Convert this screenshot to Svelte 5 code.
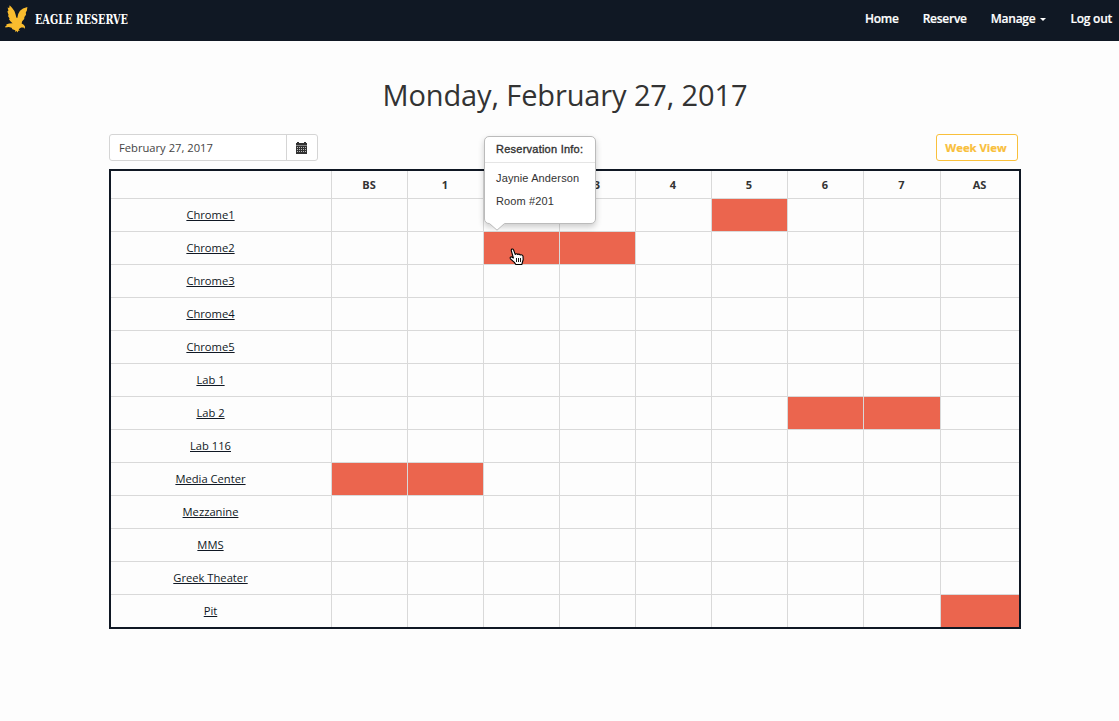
<script>
  const periods = ['BS', '1', '2', '3', '4', '5', '6', '7', 'AS'];
  const rooms = [
    { name: 'Chrome1', booked: ['5'] },
    { name: 'Chrome2', booked: ['2', '3'] },
    { name: 'Chrome3', booked: [] },
    { name: 'Chrome4', booked: [] },
    { name: 'Chrome5', booked: [] },
    { name: 'Lab 1', booked: [] },
    { name: 'Lab 2', booked: ['6', '7'] },
    { name: 'Lab 116', booked: [] },
    { name: 'Media Center', booked: ['BS', '1'] },
    { name: 'Mezzanine', booked: [] },
    { name: 'MMS', booked: [] },
    { name: 'Greek Theater', booked: [] },
    { name: 'Pit', booked: ['AS'] }
  ];
</script>

<nav class="navbar">
  <a class="brand" href="#home">
    <svg class="eagle" viewBox="0 0 24 30" width="24" height="30">
      <path fill="#f9bc2e" d="M4.6 1.2 L6.8 3.6 L9.4 7 L10.6 10.4 L11.3 13.6 L12.3 14 L13.2 10 L15 6.8 L18 4.6 L22.4 3 L21.9 6.4 L20.8 8.6 L21 10.8 L19.4 13 L19.2 15 L17.2 17.2 L16.6 19.6 L18.4 20.6 L19.9 22.2 L20 24.8 L18.4 23.6 L16.2 23.4 L14.6 24.6 L13.6 25.6 L15 26.6 L13.2 26.8 L12.8 28.4 L11.6 27 L10.4 28 L10.2 26.2 L7.4 25.2 L6.6 23.8 L3.8 23 L0.4 23.6 L.2 22.6 L2 21 L1 20.4 L4.2 19.6 L7.6 19.2 L5.6 17.4 L4 15.2 L4.6 14.4 L3 12 L3.6 11 L2.4 7.6 L3.4 6.6 L2.6 3.4 L4.2 4 Z" />
    </svg>
    <svg class="wordmark" width="100" height="20"><text x="0" y="15" textLength="93" lengthAdjust="spacingAndGlyphs">EAGLE RESERVE</text></svg>
  </a>
  <div class="links">
    <a href="#home">Home</a>
    <a href="#reserve">Reserve</a>
    <a href="#manage">Manage<i class="caret"></i></a>
    <a href="#logout">Log out</a>
  </div>
</nav>

<main>
  <h1>Monday, February 27, 2017</h1>
  <div class="toolbar">
    <div class="datepicker">
      <span class="date">February 27, 2017</span>
      <span class="addon">
        <svg width="11" height="12" viewBox="0 0 11 12" shape-rendering="crispEdges">
          <path fill="#333" d="M0 1h1V0h2v1h5V0h2v1h1v2H0z" />
          <path fill="#888" d="M0 3h11v1H0z" />
          <path fill="#333" d="M0 4h11v8H0z" />
          <path stroke="#bbb" stroke-width="1" stroke-dasharray="1 1" d="M1 5.5h9M1 7.5h9M1 9.5h9" />
        </svg>
      </span>
    </div>
    <button class="week">Week View</button>
  </div>

  <div class="schedule">
    <div class="row head">
      <div class="cell"></div>
      {#each periods as p}<div class="cell">{#if p !== '2'}{p}{/if}</div>{/each}
    </div>
    {#each rooms as room}
      <div class="row">
        <div class="cell"><a href="#room">{room.name}</a></div>
        {#each periods as p}
          <div class="cell" class:booked={room.booked.includes(p)}>
            {#if room.name === 'Chrome2' && p === '2'}
              <div class="popover">
                <div class="title">Reservation Info:</div>
                <div class="body">
                  <p>Jaynie Anderson</p>
                  <p>Room #201</p>
                </div>
                <svg class="arrow" width="16" height="8" viewBox="0 0 16 8">
                  <path fill="#fff" d="M0 0h16L8 7z" />
                  <path fill="none" stroke="#bbb" d="M.5 .5L8 7.2L15.5 .5" />
                </svg>
              </div>
              <svg class="pointer" width="15" height="18" viewBox="0 0 15 18">
                <path fill="#fff" stroke="#000" stroke-width="1.1" stroke-linejoin="round" d="M4.4 10 L2.4 3 C1.8 1 3.8 .3 4.6 2 L6.2 6.4 C6.8 5.4 8.2 5.6 8.7 6.5 C9.4 5.8 10.7 6 11.2 7 C12.4 6.4 13.8 7 14 8.2 L14.2 11.5 L12.8 16.5 H6.8 L5.4 14.4 L1.4 10.8 C.6 9.2 2 8.4 3.2 9.2 Z" />
                <path stroke="#000" stroke-width=".9" d="M7.5 10v4M9.5 10v4M11.5 10v4" />
              </svg>
            {/if}
          </div>
        {/each}
      </div>
    {/each}
  </div>
</main>

<style>
  :global(body) {
    background: #fdfdfd;
    color: #333;
    font: 11.2px/17px "Open Sans", sans-serif;
  }
  .navbar {
    box-sizing: border-box;
    height: 41px;
    background: #101824;
    display: flex;
    justify-content: space-between;
    padding: 0 7px 0 5px;
  }
  a { color: inherit; }
  .brand { display: flex; align-items: flex-start; gap: 6px; text-decoration: none; }
  .eagle { margin-top: 4px; }
  .wordmark { margin-top: 9px; }
  .wordmark text { font: bold 12.5px "DejaVu Serif Condensed", "DejaVu Serif", serif; fill: #fff; }
  .links { display: flex; gap: 24px; color: #fff; font-size: 12px; font-weight: 600; line-height: 37px; letter-spacing: -.25px; -webkit-text-stroke: .2px #fff; }
  .links a { text-decoration: none; white-space: nowrap; }
  .caret {
    display: inline-block;
    border: 3px solid transparent;
    border-top-color: #fff;
    border-bottom: 0;
    margin-left: 5px;
    vertical-align: 2px;
  }
  main { width: 912px; margin-left: 109px; padding-top: 34px; }
  h1 { margin: 0; font-size: 29px; font-weight: 400; line-height: 40px; text-align: center; letter-spacing: -.12px; }
  .toolbar { display: flex; justify-content: space-between; margin-top: 19px; padding-right: 3px; }
  .datepicker {
    box-sizing: border-box;
    width: 209px;
    height: 27px;
    border: 1px solid #d5d5d5;
    border-radius: 3px;
    display: flex;
    background: #fff;
  }
  .date { flex: 1; padding-left: 9px; line-height: 25px; color: #444; }
  .addon { width: 29px; padding-right: 1px; border-left: 1px solid #d5d5d5; display: flex; align-items: center; justify-content: center; }
  .week {
    box-sizing: border-box;
    width: 82px;
    height: 27px;
    padding: 0 2px 0 0;
    border: 1px solid #f9c03c;
    border-radius: 3px;
    background: #fff;
    color: #f9c03c;
    font: bold 11.3px/25px "Open Sans", sans-serif;
    -webkit-text-stroke: .2px #f9c03c;
  }
  .schedule { border: 2px solid #101824; margin-top: 8px; }
  .row { display: grid; grid-template-columns: 221px repeat(7, 76px) 77px 78px; height: 33px; }
  .head { height: 28px; font-weight: 700; font-size: 11px; }
  .head .cell { padding-right: 1px; }
  .cell {
    position: relative;
    box-sizing: border-box;
    border-right: 1px solid #d9d9d9;
    border-bottom: 1px solid #d9d9d9;
    display: flex;
    align-items: center;
    justify-content: center;
    color: #333;
  }
  .row:not(.head) .cell:first-child { padding: 0 21px 2px 0; }
  .cell > a { color: #101824; text-underline-offset: 1px; }
  .cell:last-child { border-right: 0; }
  .row:last-child { height: 32px; }
  .row:last-child .cell { border-bottom: 0; }
  .booked { background: #eb654e; }
  .popover {
    position: absolute;
    z-index: 2;
    left: 0;
    bottom: 40px;
    box-sizing: border-box;
    width: 112px;
    height: 88px;
    background: #fff;
    border: 1px solid #bbb;
    border-radius: 5px;
    box-shadow: 0 3px 6px rgba(0, 0, 0, .2);
    font: 11px/16px "Liberation Sans", Arial, sans-serif;
  }
  .title { height: 25px; line-height: 25px; padding-left: 11px; border-bottom: 1px solid #e5e5e5; -webkit-text-stroke: .35px #333; letter-spacing: .24px; white-space: nowrap; }
  .body { padding: 7px 0 0 11px; white-space: nowrap; letter-spacing: .13px; }
  .body p { margin: 0 0 7px; }
  .arrow { position: absolute; left: 4px; top: 86px; }
  .pointer { position: absolute; z-index: 3; left: 25px; top: 16px; }
</style>
